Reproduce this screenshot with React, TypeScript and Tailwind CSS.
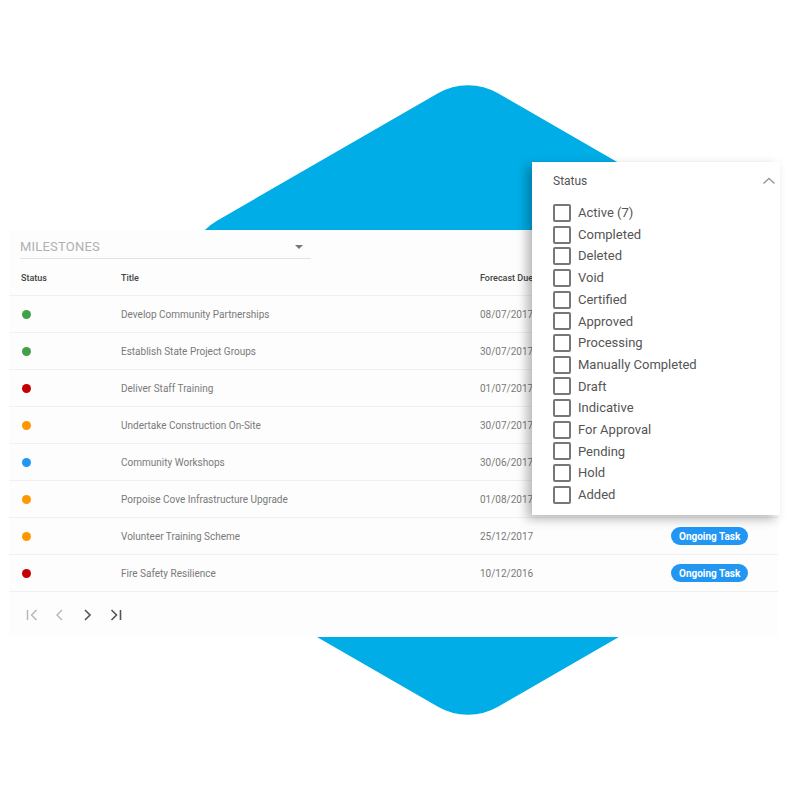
import React from "react";

const rows = [
  { c: "#43a047", t: "Develop Community Partnerships", d: "08/07/2017", b: false },
  { c: "#43a047", t: "Establish State Project Groups", d: "30/07/2017", b: false },
  { c: "#c40000", t: "Deliver Staff Training", d: "01/07/2017", b: false },
  { c: "#ff9800", t: "Undertake Construction On-Site", d: "30/07/2017", b: false },
  { c: "#2196f3", t: "Community Workshops", d: "30/06/2017", b: false },
  { c: "#ff9800", t: "Porpoise Cove Infrastructure Upgrade", d: "01/08/2017", b: false },
  { c: "#ff9800", t: "Volunteer Training Scheme", d: "25/12/2017", b: true },
  { c: "#c40000", t: "Fire Safety Resilience", d: "10/12/2016", b: true },
];

const statuses = [
  "Active (7)",
  "Completed",
  "Deleted",
  "Void",
  "Certified",
  "Approved",
  "Processing",
  "Manually Completed",
  "Draft",
  "Indicative",
  "For Approval",
  "Pending",
  "Hold",
  "Added",
];

export default function App() {
  return (
    <div
      className="relative w-[800px] h-[800px] bg-white overflow-hidden"
      style={{ fontFamily: "Roboto, 'Liberation Sans', sans-serif" }}
    >
      <svg className="absolute left-0 top-0" width="800" height="800" viewBox="0 0 800 800">
        <path
          fill="#00ade6"
          d="M438 93.3 A60 60 0 0 1 498 93.3 L719 220.7 A60 60 0 0 1 749 272.6 L749 527.4 A60 60 0 0 1 719 579.3 L498 706.7 A60 60 0 0 1 438 706.7 L217 579.3 A60 60 0 0 1 187 527.4 L187 272.6 A60 60 0 0 1 217 220.7 Z"
        />
      </svg>

      <div className="relative pt-[230px] pl-[9px]">
        <div className="relative w-[769px] h-[407px] bg-[#fdfdfd] pt-[6px]">
          <div className="ml-[11px] w-[291px] h-[23px] border-b border-[#e2e2e2] flex items-center justify-between pr-[8px]">
            <span className="text-[13px] text-[#b0b0b0] tracking-[0.2px]">MILESTONES</span>
            <span className="w-0 h-0 border-l-[4px] border-r-[4px] border-t-[4px] border-l-transparent border-r-transparent border-t-[#777]" />
          </div>

          <div className="flex items-center h-[37px] pt-[3px] border-b border-[#f0f0f0] text-[9px] font-medium text-[#444]">
            <div className="w-[112px] pl-[12px]">Status</div>
            <div className="w-[359px]">Title</div>
            <div className="w-[191px]">Forecast Due</div>
          </div>

          {rows.map((r, i) => (
            <div key={i} className="flex items-center h-[37px] border-b border-[#f0f0f0] text-[10px] text-[#7a7a7a]">
              <div className="w-[112px] pl-[13px]">
                <div className="w-[9px] h-[9px] rounded-full" style={{ backgroundColor: r.c }} />
              </div>
              <div className="w-[359px]">{r.t}</div>
              <div className="w-[191px]">{r.d}</div>
              {r.b && (
                <div className="h-[18px] px-[8px] rounded-full bg-[#2196f3] text-white font-bold text-[10px] flex items-center">
                  Ongoing Task
                </div>
              )}
            </div>
          ))}

          <div className="flex items-center h-[46px] pl-[17px] gap-[16px]">
            <svg width="12" height="12" viewBox="0 0 12 12" fill="none" stroke="#b5b5b5" strokeWidth="1.4">
              <path d="M1.5 1 V11 M10.5 1 L5.5 6 L10.5 11" />
            </svg>
            <svg width="12" height="12" viewBox="0 0 12 12" fill="none" stroke="#b5b5b5" strokeWidth="1.4">
              <path d="M8 1 L3 6 L8 11" />
            </svg>
            <svg width="12" height="12" viewBox="0 0 12 12" fill="none" stroke="#555" strokeWidth="1.6">
              <path d="M3 1 L8 6 L3 11" />
            </svg>
            <svg width="12" height="12" viewBox="0 0 12 12" fill="none" stroke="#555" strokeWidth="1.6">
              <path d="M1.5 1 L6.5 6 L1.5 11 M10.5 1 V11" />
            </svg>
          </div>
        </div>
      </div>

      <div className="absolute left-[532px] top-[162px] w-[248px] h-[353px] bg-white shadow-[-5px_4px_10px_rgba(0,0,0,0.28)] pt-[11px] pl-[21px] pr-[4px]">
        <div className="flex items-center justify-between h-[16px]">
          <span className="text-[12px] text-[#555]">Status</span>
          <svg width="14" height="8" viewBox="0 0 14 8" fill="none" stroke="#9a9a9a" strokeWidth="1.5">
            <path d="M1.5 6.5 L7 1.5 L12.5 6.5" />
          </svg>
        </div>
        <div className="mt-[13px] flex flex-col">
          {statuses.map((s) => (
            <div key={s} className="flex items-center h-[21.7px] gap-[7px]">
              <div className="w-[18px] h-[18px] border-2 border-[#777] rounded-[2px] shrink-0" />
              <span className="text-[13px] text-[#555]">{s}</span>
            </div>
          ))}
        </div>
      </div>
    </div>
  );
}
